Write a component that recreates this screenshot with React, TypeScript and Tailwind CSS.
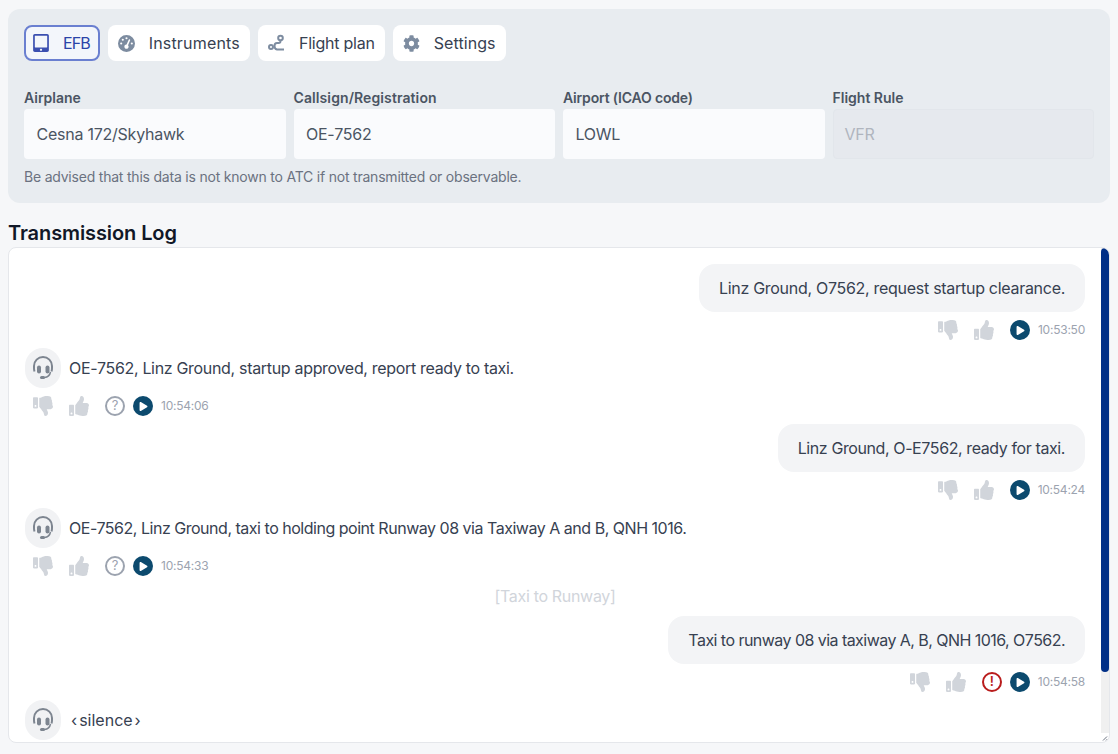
import { FaThumbsDown, FaThumbsUp, FaPlay, FaCog, FaTabletAlt } from "react-icons/fa";
import { FaGaugeHigh } from "react-icons/fa6";

function RouteIcon() {
  return (
    <svg width="17" height="18" viewBox="0 0 17 18" fill="none" stroke="#7d8ca0" strokeWidth="2">
      <circle cx="3" cy="13" r="2" />
      <circle cx="12.500" cy="4" r="2.300" />
      <path d="M12.500 6.500v.5q0 2-2 2H9q-2.500 0-2.500 3T9 15.500h7" />
    </svg>
  );
}

const TABS = [
  { label: "EFB", icon: <FaTabletAlt className="text-[18px] w-4 text-[#3b4fb0]" />, active: true, track: "tracking-[-0.06em]" },
  { label: "Instruments", icon: <FaGaugeHigh className="text-[17px] text-[#7d8ca0]" />, track: "tracking-[0.012em]" },
  { label: "Flight plan", icon: <RouteIcon />, track: "tracking-[-0.015em]" },
  { label: "Settings", icon: <FaCog className="text-[17px] text-[#7d8ca0]" />, track: "tracking-[0.005em]" },
];

const FIELDS = [
  { label: "Airplane", value: "Cesna 172/Skyhawk", track: "tracking-normal" },
  { label: "Callsign/Registration", value: "OE-7562", track: "tracking-[0.007em]" },
  { label: "Airport (ICAO code)", value: "LOWL", track: "tracking-[-0.012em]" },
  { label: "Flight Rule", value: "VFR", track: "tracking-normal", disabled: true },
];

function Headset() {
  return (
    <div className="w-9 h-10 rounded-full bg-[#f1f2f4] flex items-center justify-center shrink-0">
      <svg width="20" height="24" viewBox="0 0 20 24" fill="none" stroke="#7d8590">
        <path d="M1.500 15.500q-.5-1.500-.5-3.500v-2a9 9 0 0 1 18 0v2q0 2-.5 3.500" strokeWidth="2" />
        <rect x="4" y="9.500" width="4" height="8" rx="2" fill="#7d8590" stroke="none" />
        <rect x="12.500" y="9.500" width="4" height="8" rx="2" fill="#7d8590" stroke="none" />
        <path d="M17.500 16q-1 5-6 5.500h-2" strokeWidth="1.500" />
        <rect x="7" y="20" width="5" height="3" rx="1.500" fill="#7d8590" stroke="none" />
      </svg>
    </div>
  );
}

function Meta({ time, help, alert }: { time: string; help?: boolean; alert?: boolean }) {
  return (
    <div className="flex items-center h-5">
      <FaThumbsDown className="text-[20px] text-[#d1d5db]" />
      <FaThumbsUp className="text-[20px] text-[#d1d5db] ml-4" />
      {help && (
        <span className="ml-4 w-5 h-5 rounded-full border-2 border-[#9ca3af] text-[#9ca3af] text-[13px] flex items-center justify-center">?</span>
      )}
      {alert && (
        <span className="ml-4 w-5 h-5 rounded-full border-2 border-[#b91c1c] text-[#b91c1c] text-[13px] font-semibold flex items-center justify-center">!</span>
      )}
      <span className={`${help || alert ? "ml-2" : "ml-4"} w-5 h-5 rounded-full bg-[#0c4a6e] flex items-center justify-center`}>
        <FaPlay className="text-[9px] text-white ml-px" />
      </span>
      <span className="ml-2 text-xs tracking-[-0.02em] text-[#9ca3af]">{time}</span>
    </div>
  );
}

function Sent({ text, time, alert, track }: { text: string; time: string; alert?: boolean; track: string }) {
  return (
    <div className="flex flex-col items-end gap-2">
      <div className={`h-12 px-5 flex items-center rounded-2xl bg-[#f3f4f6] text-[#374151] ${track}`}>{text}</div>
      <Meta time={time} alert={alert} />
    </div>
  );
}

function Received({ text, time, track }: { text: string; time: string; track: string }) {
  return (
    <div className="flex flex-col gap-2">
      <div className="flex items-center gap-2 h-10">
        <Headset />
        <span className={`text-[#374151] ${track}`}>{text}</span>
      </div>
      <div className="pl-2">
        <Meta time={time} help />
      </div>
    </div>
  );
}

export default function App() {
  return (
    <div className="h-[754px] overflow-hidden bg-[#f6f7f9] p-2 pt-[9px] font-['Inter',sans-serif] tracking-[-0.02em]">
      <section className="w-[1102px] h-[194px] rounded-xl bg-[#e8ecf0] p-4">
        <div className="flex gap-2">
          {TABS.map(({ label, icon, active, track }) => (
            <div
              key={label}
              className={`h-9 rounded-lg flex items-center gap-3.5 ${active ? "pl-[7px] pr-2 bg-[#f3f6fb] border-2 border-[#6a7fd0] text-[#2b44a8]" : "px-2.5 bg-white text-[#374151]"}`}
            >
              {icon}
              <span className={track}>{label}</span>
            </div>
          ))}
        </div>
        <div className="grid grid-cols-4 gap-2 mt-[27px]">
          {FIELDS.map(({ label, value, track, disabled }) => (
            <div key={label}>
              <div className={`text-sm font-semibold leading-5 text-[#4b5563] mb-px ${track}`}>{label}</div>
              <div
                className={`h-[50px] rounded flex items-center tracking-[-0.015em] ${disabled ? "px-[11px] bg-[#e6e9ee] border border-[#e2e6eb] text-[#b0b5be]" : "px-[12.5px] bg-[#fafbfd] text-[#4b5563]"}`}
              >
                {value}
              </div>
            </div>
          ))}
        </div>
        <p className="mt-2 text-sm leading-5 tracking-[-0.015em] text-[#6b7280]">Be advised that this data is not known to ATC if not transmitted or observable.</p>
      </section>

      <h2 className="mt-[18px] text-xl leading-6 font-semibold tracking-[-0.005em] text-[#111827]">Transmission Log</h2>

      <div className="relative w-[1102px] h-[496px] mt-[2px] rounded-lg border border-[#e5e7eb] bg-white overflow-hidden">
        <div className="flex flex-col pt-4 pr-[24px] pl-4">
          <Sent text="Linz Ground, O7562, request startup clearance." time="10:53:50" track="tracking-[-0.018em]" />
          <div className="mt-2">
            <Received text="OE-7562, Linz Ground, startup approved, report ready to taxi." time="10:54:06" track="tracking-[-0.02em]" />
          </div>
          <div className="mt-2">
            <Sent text="Linz Ground, O-E7562, ready for taxi." time="10:54:24" track="tracking-[-0.025em]" />
          </div>
          <div className="mt-2">
            <Received text="OE-7562, Linz Ground, taxi to holding point Runway 08 via Taxiway A and B, QNH 1016." time="10:54:33" track="tracking-[-0.03em]" />
          </div>
          <div className="mt-2 h-6 text-center leading-6 text-[#d1d5db]">[Taxi to Runway]</div>
          <div className="mt-2">
            <Sent text="Taxi to runway 08 via taxiway A, B, QNH 1016, O7562." time="10:54:58" alert track="tracking-[-0.034em]" />
          </div>
          <div className="mt-2 flex items-center gap-2 h-10">
            <Headset />
            <span className="ml-0.5 flex gap-0.5 tracking-normal text-[#374151]">
              <span>‹</span>
              <span>silence</span>
              <span>›</span>
            </span>
          </div>
        </div>
        <div className="absolute right-0 top-0 h-[485px] w-2 bg-[#f0f0f0]">
          <div className="h-[424px] w-2 rounded-full bg-[#002f87]" />
        </div>
        <svg width="8" height="8" viewBox="0 0 8 8" className="absolute right-0 bottom-0" stroke="#6b7280" strokeWidth="1">
          <path d="M2 6.500l4-4M5 6.500l1.500-1.500" />
        </svg>
      </div>
    </div>
  );
}
